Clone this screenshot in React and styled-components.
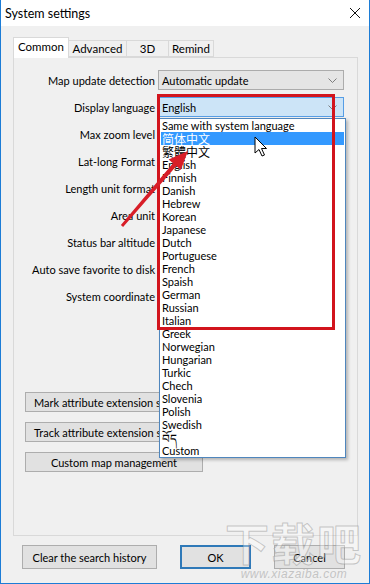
import React from "react";
import styled, { createGlobalStyle } from "styled-components";

const Global = createGlobalStyle`
  html, body {
    margin: 0;
    padding: 0;
    width: 370px;
    height: 584px;
    overflow: hidden;
    background: #f0f0f0;
  }
  * { box-sizing: border-box; }
`;

const Window = styled.div`
  position: relative;
  width: 370px;
  height: 584px;
  display: flex;
  flex-direction: column;
  background: #f0f0f0;
  border-left: 1px solid #1c7cd6;
  border-right: 1px solid #1c7cd6;
  border-bottom: 1px solid #1c7cd6;
  font-family: Lato, "Noto Sans", sans-serif;
  font-size: 11px;
  color: #000;
  overflow: hidden;
`;

const TitleBar = styled.div`
  height: 26px;
  flex: none;
  background: #fff;
  display: flex;
  align-items: center;
  justify-content: space-between;
  padding: 0 8px 0 4px;
  font-size: 12.5px;
`;

const CloseIcon = styled.svg`
  width: 12px;
  height: 12px;
`;

const Content = styled.div`
  padding: 11px 0 0 12px;
  flex: none;
`;

const TabStrip = styled.div`
  display: flex;
  align-items: flex-end;
  height: 20px;
  position: relative;
  z-index: 1;
`;

const Tab = styled.div`
  width: ${(p) => p.$w}px;
  height: ${(p) => (p.$active ? 21 : 17)}px;
  margin-left: -1px;
  margin-bottom: ${(p) => (p.$active ? -1 : 0)}px;
  border: 1px solid #d9d9d9;
  border-bottom: ${(p) => (p.$active ? "none" : "1px solid #d9d9d9")};
  background: ${(p) => (p.$active ? "#fff" : "#f0f0f0")};
  display: flex;
  align-items: center;
  justify-content: center;
  font-size: 11.5px;
  padding-bottom: ${(p) => (p.$active ? 3 : 0)}px;
  &:first-child {
    margin-left: 0;
  }
`;

const Panel = styled.div`
  width: 345px;
  height: 479px;
  border: 1px solid #d9d9d9;
  background: #f0f0f0;
  padding-top: 12px;
`;

const Form = styled.div`
  display: grid;
  grid-template-columns: 141px 186px;
  column-gap: 3px;
  row-gap: 7px;
`;

const Label = styled.div`
  height: 20px;
  display: flex;
  align-items: center;
  justify-content: flex-end;
  white-space: nowrap;
`;

const Combo = styled.div`
  height: 20px;
  display: flex;
  align-items: center;
  justify-content: space-between;
  padding: 0 6px 0 3px;
  background: ${(p) => (p.$focus ? "#cce4f7" : "#e5e5e5")};
  border: 1px solid ${(p) => (p.$focus ? "#569de5" : "#acacac")};
`;

const Chevron = () => (
  <svg width="9" height="5" viewBox="0 0 9 5">
    <path d="M0.5 0.5 L4.5 4.5 L8.5 0.5" fill="none" stroke="#707070" strokeWidth="0.9" />
  </svg>
);

const ButtonStack = styled.div`
  display: flex;
  flex-direction: column;
  gap: 10px;
  margin: 86px 0 0 11px;
`;

const Button = styled.div`
  width: ${(p) => p.$w}px;
  height: ${(p) => p.$h || 20}px;
  display: flex;
  align-items: center;
  justify-content: ${(p) => (p.$left ? "flex-start" : "center")};
  padding-left: ${(p) => (p.$left ? 8 : 0)}px;
  background: #e1e1e1;
  border: ${(p) => (p.$default ? "2px solid #2f79b8" : "1px solid #adadad")};
  white-space: nowrap;
  overflow: hidden;
`;

const Footer = styled.div`
  display: flex;
  gap: 23px;
  margin-top: 9px;
  padding-left: 21px;
`;

const DropList = styled.div`
  position: absolute;
  left: 158px;
  top: 118px;
  width: 187px;
  height: 340px;
  background: #fff;
  border: 1px solid #4f86bd;
  box-shadow: 2px 2px 3px rgba(0, 0, 0, 0.25);
  padding: 0 1px;
  z-index: 3;
`;

const Item = styled.div`
  height: 13px;
  line-height: 13px;
  padding-left: 1px;
  white-space: nowrap;
  font-size: ${(p) => (p.$cjk ? 12 : 11)}px;
  font-family: ${(p) =>
    p.$cjk ? '"Noto Sans CJK SC", sans-serif' : 'Lato, "Noto Sans", sans-serif'};
  background: ${(p) => (p.$sel ? "#3399ff" : "transparent")};
  color: ${(p) => (p.$sel ? "#fff" : "#000")};
`;

const RedBox = styled.div`
  position: absolute;
  left: 156px;
  top: 94px;
  width: 178px;
  height: 236px;
  border: 3px solid #d2141d;
  z-index: 4;
  pointer-events: none;
`;

const Overlay = styled.svg`
  position: absolute;
  left: 0;
  top: 0;
  width: 370px;
  height: 584px;
  z-index: 5;
  pointer-events: none;
`;

const Watermark = styled.div`
  position: absolute;
  right: 6px;
  bottom: 2px;
  display: flex;
  flex-direction: column;
  align-items: center;
  z-index: 6;
  pointer-events: none;
`;

const MarkBig = styled.div`
  font-family: "Noto Sans CJK SC", sans-serif;
  font-size: 44px;
  font-weight: 700;
  line-height: 50px;
  letter-spacing: 2px;
  color: rgba(255, 255, 255, 0.35);
  -webkit-text-stroke: 1px rgba(140, 140, 140, 0.45);
`;

const MarkSmall = styled.div`
  font-family: "Liberation Sans", sans-serif;
  font-size: 12px;
  font-style: italic;
  color: rgba(150, 150, 150, 0.5);
  letter-spacing: 0.5px;
`;

const rows = [
  ["Map update detection", "Automatic update"],
  ["Display language", "English"],
  ["Max zoom level", ""],
  ["Lat-long Format", ""],
  ["Length unit format", ""],
  ["Area unit", ""],
  ["Status bar altitude", ""],
  ["Auto save favorite to disk", ""],
  ["System coordinate", ""],
];

const languages = [
  "Same with system language",
  "简体中文",
  "繁體中文",
  "English",
  "Finnish",
  "Danish",
  "Hebrew",
  "Korean",
  "Japanese",
  "Dutch",
  "Portuguese",
  "French",
  "Spaish",
  "German",
  "Russian",
  "Italian",
  "Greek",
  "Norwegian",
  "Hungarian",
  "Turkic",
  "Chech",
  "Slovenia",
  "Polish",
  "Swedish",
  "བོད",
  "Custom",
];

const tabs = [
  ["Common", 56],
  ["Advanced", 59],
  ["3D", 43],
  ["Remind", 46],
];

export default function App() {
  return (
    <>
      <Global />
      <Window>
        <TitleBar>
          <span>System settings</span>
          <CloseIcon viewBox="0 0 12 12">
            <path d="M1 1 L11 11 M11 1 L1 11" stroke="#111" strokeWidth="1" />
          </CloseIcon>
        </TitleBar>
        <Content>
          <TabStrip>
            {tabs.map(([name, w], i) => (
              <Tab key={name} $w={w} $active={i === 0}>
                {name}
              </Tab>
            ))}
          </TabStrip>
          <Panel>
            <Form>
              {rows.map(([label, value], i) => (
                <React.Fragment key={label}>
                  <Label>{label}</Label>
                  <Combo $focus={i === 1}>
                    <span>{value}</span>
                    <Chevron />
                  </Combo>
                </React.Fragment>
              ))}
            </Form>
            <ButtonStack>
              <Button $w={178} $left>Mark attribute extension settings</Button>
              <Button $w={178} $left>Track attribute extension settings</Button>
              <Button $w={178}>Custom map management</Button>
            </ButtonStack>
          </Panel>
        </Content>
        <Footer>
          <Button $w={135} $h={24}>Clear the search history</Button>
          <Button $w={71} $h={24} $default>OK</Button>
          <Button $w={71} $h={24}>Cancel</Button>
        </Footer>

        <DropList>
          {languages.map((l, i) => (
            <Item key={l} $sel={i === 1} $cjk={i === 1 || i === 2 || i === 24}>
              {l}
            </Item>
          ))}
        </DropList>
        <RedBox />
        <Overlay viewBox="0 0 370 584">
          <polygon
            points="122.1,227 175.4,166.1 179.8,169.9 187,151 167.6,159.5 172,163.3 119.9,225"
            fill="#d81e28"
          />
          <path
            d="M254 137 L254 153 L258 149.5 L261 156 L263.5 155 L260.5 148.5 L265.5 148.5 Z"
            fill="#fff"
            stroke="#000"
            strokeWidth="1"
            strokeLinejoin="round"
          />
        </Overlay>
        <Watermark>
          <MarkBig>下载吧</MarkBig>
          <MarkSmall>www.xiazaiba.com</MarkSmall>
        </Watermark>
      </Window>
    </>
  );
}
